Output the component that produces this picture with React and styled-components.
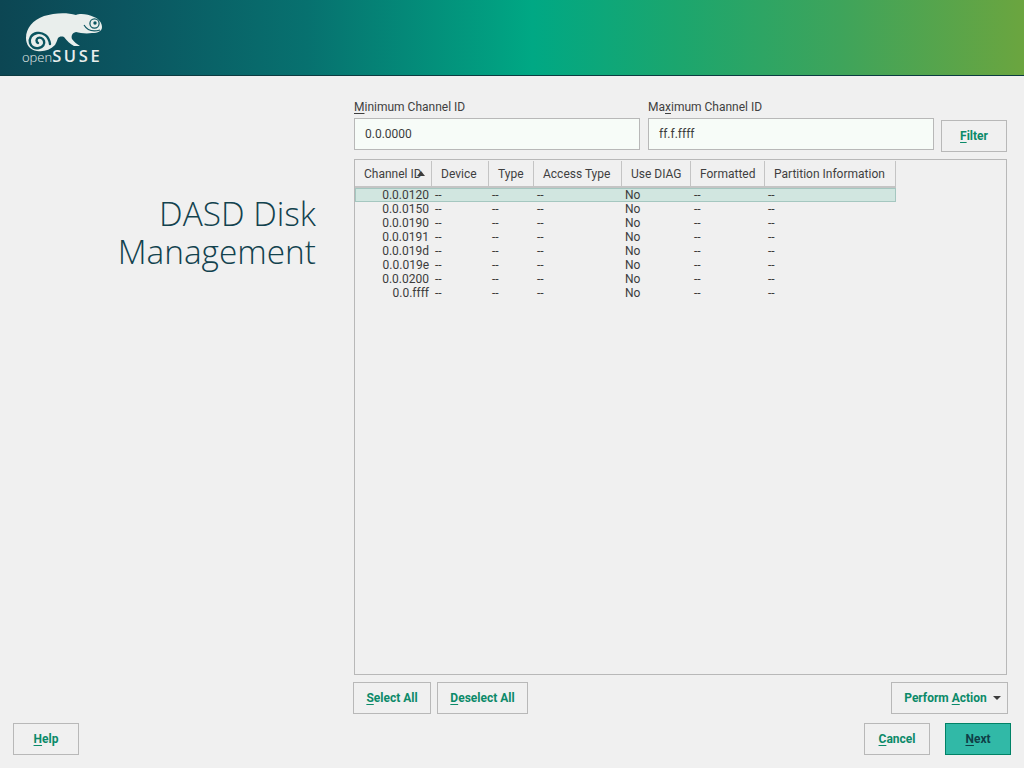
import React from 'react'
import styled, { createGlobalStyle } from 'styled-components'

const GlobalStyle = createGlobalStyle`
html, body {
  margin: 0;
  padding: 0;
  background: #f0f0f0;
  font-family: Roboto, "Liberation Sans", sans-serif;
}
`

const Page = styled.div`
  width: 1024px;
  height: 768px;
  display: flex;
  flex-direction: column;
  overflow: hidden;
  background: #f0f0f0;
  color: #3c3c3c;
`

const Banner = styled.header`
  height: 75px;
  flex: none;
  display: flex;
  align-items: flex-start;
  border-bottom: 1px solid #0c3b41;
  background: linear-gradient(90deg, #0c4653 0%, #0b5560 12%, #07716f 30%, #00a884 52%, #1ba66e 66%, #3ea45b 82%, #6ba53f 100%);
`

const LogoWrap = styled.div`
  position: relative;
  width: 90px;
  height: 60px;
  margin: 12px 0 0 22px;
  color: #e9eeec;
`

const LogoText = styled.div`
  position: absolute;
  left: 0;
  top: 35px;
  font-family: "Open Sans", sans-serif;
  font-size: 13px;
  font-weight: 300;
  line-height: 17px;
  white-space: nowrap;

  b {
    font-size: 16.5px;
    font-weight: 600;
    letter-spacing: 2.6px;
  }
`

const Main = styled.main`
  flex: 1;
  display: flex;
  min-height: 0;
`

const Side = styled.aside`
  width: 316px;
  flex: none;
  padding-top: 118px;
  text-align: right;
`

const Title = styled.h1`
  margin: 0;
  font-family: "Open Sans", sans-serif;
  font-weight: 300;
  font-size: 33.4px;
  line-height: 38px;
  color: #12424e;
`

const Content = styled.section`
  flex: none;
  width: 653px;
  margin-left: 38px;
  padding-top: 24px;
  display: flex;
  flex-direction: column;
`

const FilterRow = styled.div`
  display: flex;
  align-items: flex-end;
`

const Field = styled.label`
  width: 286px;
  display: flex;
  flex-direction: column;
  margin-right: ${p => p.$gap}px;
  margin-bottom: 2px;
  font-size: 12px;
`

const FieldLabel = styled.span`
  height: 18px;
  line-height: 14px;
  color: #3f3f3f;
`

const Input = styled.div`
  box-sizing: border-box;
  height: 32px;
  padding: 0 10px;
  border: 1px solid #b8b8b8;
  background: #f7fcf8;
  font-size: 12px;
  line-height: 31px;
  color: #3c3c3c;
`

const Key = styled.u`
  text-underline-offset: 2px;
`

const Button = styled.button`
  box-sizing: border-box;
  height: 32px;
  width: ${p => p.$w}px;
  padding: 0 0 0 ${p => p.$pad || 0}px;
  flex: none;
  display: inline-flex;
  align-items: center;
  justify-content: center;
  gap: 6px;
  font-family: Roboto, sans-serif;
  font-size: 12px;
  font-weight: 700;
  border: 1px solid ${p => (p.$primary ? '#008266' : '#b8b8b8')};
  background: ${p => (p.$primary ? '#31b9a7' : '#f0f0f0')};
  color: ${p => (p.$primary ? '#0f3f47' : '#0b8a69')};
`

const Caret = styled.span`
  width: 0;
  height: 0;
  border-left: 4px solid transparent;
  border-right: 4px solid transparent;
  border-top: 4px solid #3c3c3c;
`

const TableBox = styled.div`
  box-sizing: border-box;
  height: 516px;
  margin-top: 7px;
  padding-top: 1px;
  border: 1px solid #b8b8b8;
  background: #f0f0f0;
`

const columns = '77px 57px 45px 88px 69px 74px 131px'

const HeadRow = styled.div`
  display: grid;
  width: 541px;
  grid-template-columns: ${columns};
`

const HeadCell = styled.div`
  position: relative;
  box-sizing: border-box;
  height: 27px;
  padding-left: 9px;
  border-right: 1px solid #c4c4c4;
  border-bottom: 2px solid #c4c4c4;
  font-size: 12px;
  line-height: 26px;
  white-space: nowrap;
  color: #3f3f3f;
`

const SortMark = styled.span`
  position: absolute;
  left: 62px;
  top: 10px;
  width: 0;
  height: 0;
  border-left: 4px solid transparent;
  border-right: 4px solid transparent;
  border-bottom: 5px solid #3c3c3c;
`

const Row = styled.div`
  box-sizing: border-box;
  display: grid;
  width: 541px;
  height: 14px;
  grid-template-columns: ${columns};
  font-size: 12px;
  line-height: 14px;
  color: #3c3c3c;
  background: ${p => (p.$selected ? '#d1e6e0' : 'transparent')};
  outline: ${p => (p.$selected ? '1px solid #a5c7c0' : 'none')};
  outline-offset: -1px;
`

const Cell = styled.div`
  padding: 0 3px;
  text-align: ${p => (p.$right ? 'right' : 'left')};
  white-space: nowrap;
`

const ActionRow = styled.div`
  display: flex;
  margin: 7px -1px 0;
  gap: 6px;
`

const Spacer = styled.div`
  flex: 1;
`

const Footer = styled.footer`
  flex: none;
  height: 45px;
  padding: 0 13px;
  display: flex;
  align-items: flex-start;
  gap: 15px;
`

const Chameleon = () => (
  <svg width="82" height="40" viewBox="22 12 82 40" style={{ position: 'absolute', left: 0, top: 0 }}>
    <path
      fill="currentColor"
      d="M26 38 C26 28 33 20 44 16 C54 13 66 12 76 15 C80 13 88 14 94 17 C99 19 102 23 102 27 C102 31 98 33 92 33 C86 34 80 33 76 32 C72 33 71 36 72 39 C74 42 77 44 80 46 L74 46 C70 44 67 41 64 37 C61 36 59 37 58 38 C57 41 56 43 55 45 C50 50 44 52 37 51 C30 50 26 45 26 38 Z"
    />
    <path
      fill="none"
      stroke="#0b5560"
      strokeWidth="2.4"
      strokeLinecap="round"
      d="M50 44 C49 36 43 32 37 33 C31 34 29 39 30 43 C31 47 35 49 39 48 C43 47 45 44 44 41 C43 38 40 37 38 38 C36 39 36 42 38 43"
    />
    <circle cx="94.5" cy="23.5" r="4.6" fill="#e9eeec" stroke="#0b5560" strokeWidth="1.2" />
    <circle cx="95" cy="23" r="1.7" fill="#0b5560" />
    <path d="M84 25 C87 30 93 32 100 30" fill="none" stroke="#0b5560" strokeWidth="1.2" />
  </svg>
)

const rows = ['0.0.0120', '0.0.0150', '0.0.0190', '0.0.0191', '0.0.019d', '0.0.019e', '0.0.0200', '0.0.ffff']
const heads = ['Channel ID', 'Device', 'Type', 'Access Type', 'Use DIAG', 'Formatted', 'Partition Information']

export default function App() {
  return (
    <Page>
      <GlobalStyle />
      <Banner>
        <LogoWrap>
          <Chameleon />
          <LogoText>open<b>SUSE</b></LogoText>
        </LogoWrap>
      </Banner>
      <Main>
        <Side>
          <Title>DASD Disk<br />Management</Title>
        </Side>
        <Content>
          <FilterRow>
            <Field $gap={8}>
              <FieldLabel><Key>M</Key>inimum Channel ID</FieldLabel>
              <Input>0.0.0000</Input>
            </Field>
            <Field $gap={7}>
              <FieldLabel>Ma<Key>x</Key>imum Channel ID</FieldLabel>
              <Input>ff.f.ffff</Input>
            </Field>
            <Button $w={66}><span><Key>F</Key>ilter</span></Button>
          </FilterRow>
          <TableBox>
            <HeadRow>
              {heads.map((h, i) => (
                <HeadCell key={h}>
                  {h}
                  {i === 0 && <SortMark />}
                </HeadCell>
              ))}
            </HeadRow>
            {rows.map((id, i) => (
              <Row key={id} $selected={i === 0}>
                <Cell $right>{id}</Cell>
                <Cell>--</Cell>
                <Cell>--</Cell>
                <Cell>--</Cell>
                <Cell>No</Cell>
                <Cell>--</Cell>
                <Cell>--</Cell>
              </Row>
            ))}
          </TableBox>
          <ActionRow>
            <Button $w={78}><span><Key>S</Key>elect All</span></Button>
            <Button $w={91}><span><Key>D</Key>eselect All</span></Button>
            <Spacer />
            <Button $w={117} $pad={6}><span>Perform <Key>A</Key>ction</span><Caret /></Button>
          </ActionRow>
        </Content>
      </Main>
      <Footer>
        <Button $w={66}><span><Key>H</Key>elp</span></Button>
        <Spacer />
        <Button $w={66}><span><Key>C</Key>ancel</span></Button>
        <Button $w={66} $primary><span><Key>N</Key>ext</span></Button>
      </Footer>
    </Page>
  )
}
